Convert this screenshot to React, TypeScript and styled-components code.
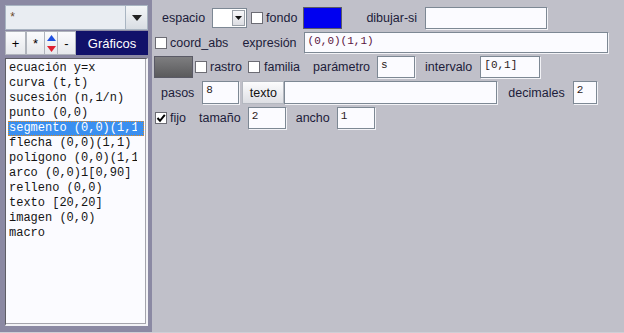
import React from "react";
import styled, { createGlobalStyle } from "styled-components";

const Global = createGlobalStyle`
  html, body { margin: 0; padding: 0; overflow: hidden; }
  body { font-family: "Liberation Sans", Arial, sans-serif; }
`;

const Frame = styled.div`
  width: 624px;
  height: 332px;
  display: flex;
  border-bottom: 1px solid #cfcfd6;
`;

const Left = styled.div`
  width: 152px;
  background: #8b89a3;
  padding: 5px 4px 6px 5px;
  box-sizing: border-box;
  display: flex;
  flex-direction: column;
`;

const Combo = styled.div`
  display: flex;
  height: 25px;
`;

const ComboField = styled.div`
  flex: 1;
  background: #e9edf2;
  border: 1px solid #a9b5c2;
  font-family: "Liberation Mono", monospace;
  font-size: 12px;
  color: #6a4a2a;
  padding-left: 3px;
  display: flex;
  align-items: center;
`;

const ComboButton = styled.div`
  width: 21px;
  background: linear-gradient(#f4f6f8, #d8dde3);
  border: 1px solid #a9b5c2;
  border-left: none;
  display: flex;
  align-items: center;
  justify-content: center;
`;

const Tools = styled.div`
  display: flex;
  height: 24px;
  margin-top: 1px;
`;

const ToolButton = styled.div<{ $w: number }>`
  width: ${(p) => p.$w}px;
  box-sizing: border-box;
  background: linear-gradient(#fbfbfd, #e6e8ec);
  border: 1px solid #b0b4bc;
  display: flex;
  align-items: center;
  justify-content: center;
  font-family: "Liberation Sans", Arial, sans-serif;
  font-size: 13px;
  color: #000;
`;

const Arrows = styled.div`
  width: 12px;
  display: flex;
  flex-direction: column;
  background: linear-gradient(#fbfbfd, #e6e8ec);
  border-top: 1px solid #b0b4bc;
  border-bottom: 1px solid #b0b4bc;
  box-sizing: border-box;
`;

const ArrowHalf = styled.div`
  flex: 1;
  display: flex;
  align-items: center;
  justify-content: center;
`;

const Tab = styled.div`
  flex: 1;
  background: #11116a;
  color: #fff;
  font-size: 13px;
  display: flex;
  align-items: center;
  justify-content: center;
`;

const List = styled.div`
  flex: 1;
  margin-top: 3px;
  background: #fbfbff;
  border-style: solid;
  border-width: 1px 2px 2px 1px;
  border-color: #5e5e66 #f2f2f6 #f2f2f6 #5e5e66;
  box-shadow: inset -1px -1px 0 #a4a4ac;
  padding: 2px 2px 0 2px;
  font-family: "Liberation Mono", monospace;
  font-size: 12px;
  color: #141414;
`;

const Item = styled.div<{ $sel?: boolean }>`
  height: 15px;
  line-height: 15px;
  padding-left: 1px;
  box-sizing: border-box;
  background: ${(p) => (p.$sel ? "#3a8ff0" : "transparent")};
  color: ${(p) => (p.$sel ? "#fff" : "#141414")};
  outline: ${(p) => (p.$sel ? "1px dotted #e08a20" : "none")};
  outline-offset: -1px;
`;

const ItemText = styled.span`
  display: block;
  width: 128px;
  white-space: nowrap;
  overflow: hidden;
`;

const Right = styled.div`
  flex: 1;
  background: #c0c0c9;
  padding-top: 7px;
  display: flex;
  flex-direction: column;
  gap: 3px;
`;

const Row = styled.div<{ $h?: number }>`
  display: flex;
  align-items: center;
  height: ${(p) => p.$h ?? 22}px;
`;

const Label = styled.span<{ $ml: number }>`
  margin-left: ${(p) => p.$ml}px;
  font-size: 12.5px;
  color: #1c1c3a;
  white-space: nowrap;
`;

const Field = styled.div<{ $ml: number; $w: number; $h?: number; $color?: string }>`
  margin-left: ${(p) => p.$ml}px;
  width: ${(p) => p.$w}px;
  height: ${(p) => p.$h ?? 22}px;
  box-sizing: border-box;
  background: #fbfbff;
  border: 1px solid #7d8894;
  box-shadow: 1px 1px 0 #f2f2f6;
  font-family: "Liberation Mono", monospace;
  font-size: 11px;
  color: ${(p) => p.$color ?? "#2a1a1a"};
  padding: 2px 0 0 3px;
  white-space: nowrap;
  overflow: hidden;
`;

const Box = styled.div<{ $ml: number }>`
  margin-left: ${(p) => p.$ml}px;
  width: 12px;
  height: 12px;
  box-sizing: border-box;
  background: #fff;
  border: 1px solid #6c6c74;
  display: flex;
  align-items: center;
  justify-content: center;
`;

const Swatch = styled.div<{ $ml: number; $bg: string }>`
  margin-left: ${(p) => p.$ml}px;
  width: 39px;
  height: 22px;
  background: ${(p) => p.$bg};
  border: 1px solid #5a5a66;
  box-sizing: border-box;
`;

const MiniSelect = styled.div<{ $ml: number }>`
  margin-left: ${(p) => p.$ml}px;
  width: 35px;
  height: 20px;
  box-sizing: border-box;
  display: flex;
  border: 1px solid #7d8894;
  background: #fff;
`;

const MiniSelectBtn = styled.div`
  margin-left: auto;
  width: 13px;
  height: 16px;
  margin-top: 1px;
  margin-right: 1px;
  background: linear-gradient(#f8f8fa, #dcdde2);
  border: 1px solid #9aa0a8;
  box-sizing: border-box;
  display: flex;
  align-items: center;
  justify-content: center;
`;

const PushButton = styled.div<{ $ml: number }>`
  margin-left: ${(p) => p.$ml}px;
  width: 42px;
  height: 23px;
  box-sizing: border-box;
  background: linear-gradient(#fcfcfd, #dedfe4);
  border: 1px solid #b4b8c0;
  font-size: 12.5px;
  color: #111;
  display: flex;
  align-items: center;
  justify-content: center;
`;

const Check = () => (
  <svg width="10" height="10" viewBox="0 0 10 10">
    <path d="M1.5 5 L4 7.8 L8.8 1.8" stroke="#000" strokeWidth="2" fill="none" />
  </svg>
);

const Tri = ({ c, up, w = 9, h = 5 }: { c: string; up?: boolean; w?: number; h?: number }) => (
  <svg width={w} height={h} viewBox={`0 0 ${w} ${h}`}>
    <polygon points={up ? `0,${h} ${w / 2},0 ${w},${h}` : `0,0 ${w},0 ${w / 2},${h}`} fill={c} />
  </svg>
);

const items = [
  "ecuación y=x",
  "curva (t,t)",
  "sucesión (n,1/n)",
  "punto (0,0)",
  "segmento (0,0)(1,1)",
  "flecha (0,0)(1,1)",
  "polígono (0,0)(1,1)",
  "arco (0,0)1[0,90]",
  "relleno (0,0)",
  "texto [20,20]",
  "imagen (0,0)",
  "macro",
];

export default function App() {
  return (
    <>
      <Global />
      <Frame>
        <Left>
          <Combo>
            <ComboField>*</ComboField>
            <ComboButton>
              <Tri c="#222" w={10} h={6} />
            </ComboButton>
          </Combo>
          <Tools>
            <ToolButton $w={21}>+</ToolButton>
            <ToolButton $w={19}>*</ToolButton>
            <Arrows>
              <ArrowHalf>
                <Tri c="#2050e0" up w={9} h={6} />
              </ArrowHalf>
              <ArrowHalf>
                <Tri c="#e02030" w={9} h={6} />
              </ArrowHalf>
            </Arrows>
            <ToolButton $w={19}>-</ToolButton>
            <Tab>Gráficos</Tab>
          </Tools>
          <List>
            {items.map((t, i) => (
              <Item key={t} $sel={i === 4}>
                <ItemText>{t}</ItemText>
              </Item>
            ))}
          </List>
        </Left>
        <Right>
          <Row>
            <Label $ml={10}>espacio</Label>
            <MiniSelect $ml={7}>
              <MiniSelectBtn>
                <Tri c="#111" w={7} h={4} />
              </MiniSelectBtn>
            </MiniSelect>
            <Box $ml={4} />
            <Label $ml={3}>fondo</Label>
            <Swatch $ml={6} $bg="#0000f0" />
            <Label $ml={24}>dibujar-si</Label>
            <Field $ml={8} $w={122} />
          </Row>
          <Row $h={21}>
            <Box $ml={3} />
            <Label $ml={3}>coord_abs</Label>
            <Label $ml={14}>expresión</Label>
            <Field $ml={7} $w={304} $h={21} $color="#5a1440">
              (0,0)(1,1)
            </Field>
          </Row>
          <Row>
            <Swatch $ml={2} $bg="linear-gradient(#7e7e80, #5a5a5c)" />
            <Box $ml={2} />
            <Label $ml={3}>rastro</Label>
            <Box $ml={6} />
            <Label $ml={4}>familia</Label>
            <Label $ml={13}>parámetro</Label>
            <Field $ml={7} $w={38}>s</Field>
            <Label $ml={10}>intervalo</Label>
            <Field $ml={8} $w={60}>[0,1]</Field>
          </Row>
          <Row $h={23}>
            <Label $ml={9}>pasos</Label>
            <Field $ml={8} $w={37} $h={23}>8</Field>
            <PushButton $ml={3}>texto</PushButton>
            <Field $ml={0} $w={213} $h={23} />
            <Label $ml={11}>decimales</Label>
            <Field $ml={8} $w={24} $h={23}>2</Field>
          </Row>
          <Row>
            <Box $ml={3}>
              <Check />
            </Box>
            <Label $ml={3}>fijo</Label>
            <Label $ml={13}>tamaño</Label>
            <Field $ml={7} $w={38}>2</Field>
            <Label $ml={10}>ancho</Label>
            <Field $ml={7} $w={38}>1</Field>
          </Row>
        </Right>
      </Frame>
    </>
  );
}
